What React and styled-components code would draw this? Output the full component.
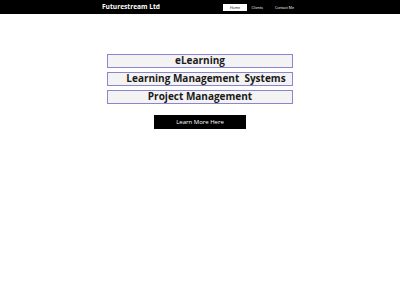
import React from "react";
import styled, { createGlobalStyle } from "styled-components";

const Global = createGlobalStyle`
  html, body { margin: 0; padding: 0; background: #ffffff; }
  body { font-family: "Open Sans", "Liberation Sans", sans-serif; }
`;

const Header = styled.header`
  background: #000;
  height: 14px;
`;

const HeaderInner = styled.div`
  width: 196px;
  margin: 0 auto;
  height: 100%;
  display: flex;
  align-items: center;
  justify-content: space-between;
`;

const Brand = styled.div`
  color: #fff;
  font-weight: 700;
  font-size: 6.6px;
  line-height: 1;
`;

const Nav = styled.nav`
  display: flex;
  align-items: center;
  padding-right: 4px;
`;

const NavItem = styled.a`
  display: block;
  font-size: 3.6px;
  line-height: 7px;
  height: 7px;
  padding: 0 ${(p) => p.$pad}px;
  margin-right: ${(p) => p.$gap || 0}px;
  color: ${(p) => (p.$active ? "#000" : "#fff")};
  background: ${(p) => (p.$active ? "#fff" : "transparent")};
  text-decoration: none;
`;

const Main = styled.main`
  display: flex;
  flex-direction: column;
  align-items: center;
  padding-top: 40px;
`;

const Boxes = styled.div`
  display: flex;
  flex-direction: column;
  gap: 4px;
  width: 186px;
`;

const Box = styled.div`
  box-sizing: border-box;
  height: 14px;
  border: 1.5px solid #8c84cc;
  background: #f3f3f3;
  color: #1a1a1a;
  font-weight: 700;
  font-size: 10px;
  line-height: 11px;
  text-align: center;
  white-space: pre;
  padding-left: ${(p) => p.$indent || 0}px;
`;

const Button = styled.a`
  margin-top: 11px;
  width: 92px;
  height: 14px;
  background: #000;
  color: #fff;
  font-size: 6px;
  line-height: 14px;
  text-align: center;
  text-decoration: none;
  display: block;
`;

export default function App() {
  return (
    <>
      <Global />
      <Header>
        <HeaderInner>
          <Brand>Futurestream Ltd</Brand>
          <Nav>
            <NavItem $active $pad={6.5} $gap={5}>Home</NavItem>
            <NavItem $pad={0} $gap={12}>Clients</NavItem>
            <NavItem $pad={0}>Contact Me</NavItem>
          </Nav>
        </HeaderInner>
      </Header>
      <Main>
        <Boxes>
          <Box>eLearning</Box>
          <Box $indent={12}>Learning Management  Systems</Box>
          <Box>Project Management</Box>
        </Boxes>
        <Button>Learn More Here</Button>
      </Main>
    </>
  );
}
